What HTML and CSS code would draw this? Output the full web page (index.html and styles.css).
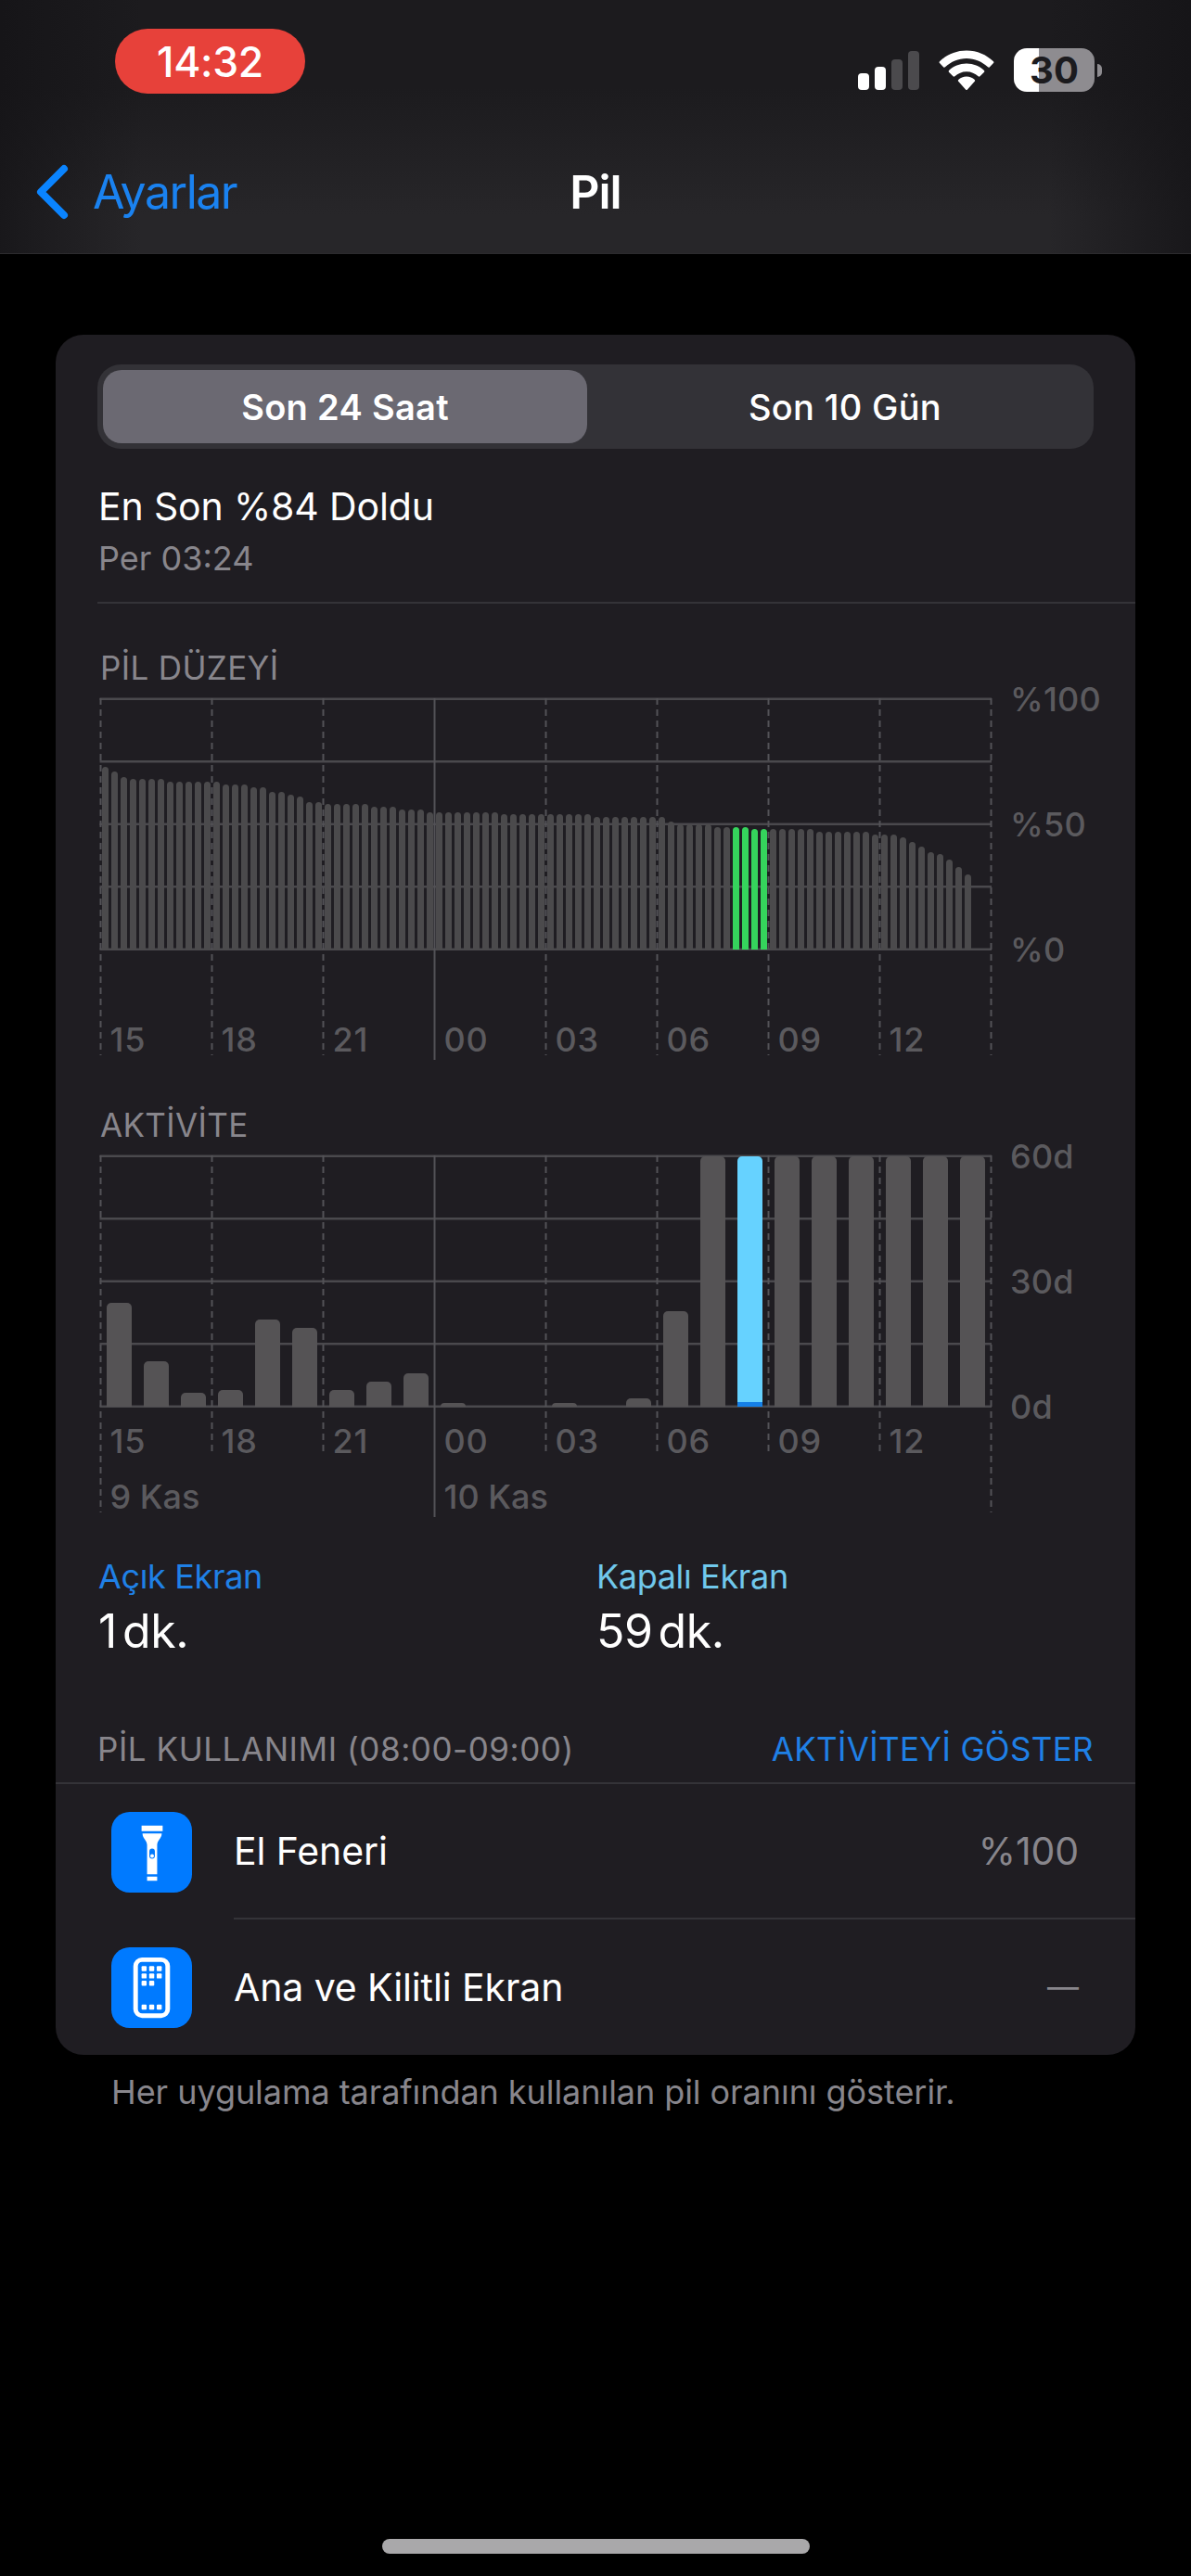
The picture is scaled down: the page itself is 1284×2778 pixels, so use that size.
FILE: index.html
```html
<!DOCTYPE html>
<html lang="tr">
<head>
<meta charset="utf-8">
<title>Pil</title>
<link rel="stylesheet" href="styles.css">
</head>

<body>
<header class="top">
  <div class="status">
    <span class="clock">14:32</span>
    <div class="status-icons">
      <svg class="signal" width="66" height="42" viewBox="0 0 66 42">
        <rect x="0" y="24" width="12" height="18" rx="4" fill="#fff"/>
        <rect x="18" y="17" width="12" height="25" rx="4" fill="#fff"/>
        <rect x="36" y="9" width="12" height="33" rx="4" fill="#4b4a4d"/>
        <rect x="54" y="0" width="12" height="42" rx="4" fill="#4b4a4d"/>
      </svg>
      <svg class="wifi" width="60" height="44" viewBox="0 0 60 44">
        <path fill="#fff" d="M30 0.5 C41.5 0.5 51.5 5 59 12.3 Q59.8 13.2 59 14.1 L55 18.2 Q54 19.2 53 18.3 C46.8 12.5 38.8 9 30 9 C21.2 9 13.2 12.5 7 18.3 Q6 19.2 5 18.2 L1 14.1 Q0.2 13.2 1 12.3 C8.500 5 18.500 0.500 30 0.500 Z"/>
        <path fill="#fff" d="M30 14.500 C37.600 14.500 44 17.300 49 21.900 Q49.800 22.800 49 23.700 L44.500 28.300 Q43.600 29.200 42.600 28.300 C39.300 25.200 35 23.200 30 23.200 C25 23.200 20.700 25.200 17.400 28.300 Q16.400 29.200 15.500 28.300 L11 23.700 Q10.200 22.800 11 21.900 C16 17.300 22.400 14.500 30 14.500 Z"/>
        <path fill="#fff" d="M30 28.500 C33.500 28.500 36.500 29.900 38.800 32 Q39.700 32.900 38.800 33.800 L31 42.600 Q30 43.600 29 42.600 L21.200 33.800 Q20.300 32.900 21.200 32 C23.500 29.900 26.500 28.500 30 28.500 Z"/>
      </svg>
      <div class="battery"><span>30</span></div>
      <i class="battery-tip"></i>
    </div>
  </div>
  <nav class="nav">
    <a class="back">
      <svg width="36" height="60" viewBox="0 0 36 60"><path d="M31 5 L6 30 L31 55" fill="none" stroke="#0a84ff" stroke-width="8" stroke-linecap="round" stroke-linejoin="round"/></svg>
      <span>Ayarlar</span>
    </a>
    <h1>Pil</h1>
  </nav>
</header>

<main>
  <section class="card">
    <div class="segmented">
      <span class="segment selected">Son 24 Saat</span>
      <span class="segment">Son 10 Gün</span>
    </div>

    <div class="last-charge">
      <p class="charge-title">En Son %84 Doldu</p>
      <p class="charge-time">Per 03:24</p>
    </div>

    <h2>PİL DÜZEYİ</h2>
    <div class="chart">
      <div class="plot">
        <svg class="grid" id="level-grid" width="964" height="392"></svg>
        <div class="bars level" id="level-bars"></div>
        <div class="hours hours-low"><span>15</span><span>18</span><span>21</span><span>00</span><span>03</span><span>06</span><span>09</span><span>12</span></div>
      </div>
      <div class="scale"><span>%100</span><span>%50</span><span>%0</span></div>
    </div>

    <h2>AKTİVİTE</h2>
    <div class="chart">
      <div class="plot">
        <svg class="grid" id="activity-grid" width="964" height="392"></svg>
        <div class="bars activity" id="activity-bars"></div>
        <div class="hours"><span>15</span><span>18</span><span>21</span><span>00</span><span>03</span><span>06</span><span>09</span><span>12</span></div>
        <div class="days"><span>9 Kas</span><span>10 Kas</span></div>
      </div>
      <div class="scale"><span>60d</span><span>30d</span><span>0d</span></div>
    </div>

    <div class="screen-times">
      <div>
        <p class="screen-label on">Açık Ekran</p>
        <p class="screen-value">1<span>dk.</span></p>
      </div>
      <div>
        <p class="screen-label off">Kapalı Ekran</p>
        <p class="screen-value">59<span>dk.</span></p>
      </div>
    </div>

    <div class="usage-head">
      <span class="usage-title">PİL KULLANIMI (08:00-09:00)</span>
      <a class="usage-toggle">AKTİVİTEYİ GÖSTER</a>
    </div>

    <div class="row">
      <svg class="icon" width="87" height="87" viewBox="0 0 88 88">
        <rect width="88" height="88" rx="20" fill="#007aff"/>
        <path fill="#fff" d="M33 15 H56 V21 H33 Z M34 23.500 H55 C55 29 50 31 50 36 V68 H39 V36 C39 31 34 29 34 23.500 Z M39 70.500 H50 V75 H39 Z"/>
        <rect x="41.500" y="40" width="6" height="11" rx="3" fill="#007aff"/>
        <circle cx="44.500" cy="48" r="2" fill="#fff"/>
      </svg>
      <div class="row-body line">
        <span>El Feneri</span>
        <span class="amount">%100</span>
      </div>
    </div>
    <div class="row">
      <svg class="icon" width="87" height="87" viewBox="0 0 88 88">
        <rect width="88" height="88" rx="20" fill="#007aff"/>
        <rect x="26.500" y="13.500" width="35" height="61" rx="7" fill="none" stroke="#fff" stroke-width="5"/>
        <g fill="#fff">
          <rect x="33" y="20.500" width="5.500" height="5.500" rx="1"/><rect x="41.300" y="20.500" width="5.500" height="5.500" rx="1"/><rect x="49.500" y="20.500" width="5.500" height="5.500" rx="1"/>
          <rect x="33" y="28.500" width="5.500" height="5.500" rx="1"/><rect x="41.300" y="28.500" width="5.500" height="5.500" rx="1"/><rect x="49.500" y="28.500" width="5.500" height="5.500" rx="1"/>
          <rect x="33" y="36.500" width="5.500" height="5.500" rx="1"/><rect x="41.300" y="36.500" width="5.500" height="5.500" rx="1"/>
          <rect x="33" y="62.500" width="5.500" height="5.500" rx="1"/><rect x="41.300" y="62.500" width="5.500" height="5.500" rx="1"/><rect x="49.500" y="62.500" width="5.500" height="5.500" rx="1"/>
        </g>
      </svg>
      <div class="row-body">
        <span>Ana ve Kilitli Ekran</span>
        <span class="amount dash">—</span>
      </div>
    </div>
  </section>
  <p class="note">Her uygulama tarafından kullanılan pil oranını gösterir.</p>
</main>

<footer class="home"><i></i></footer>

<script src="charts.js"></script>
</body>
</html>
```
FILE: styles.css
```css
* {
  box-sizing: border-box;
}

body {
  display: flex;
  flex-direction: column;
  width: 1284px;
  height: 2778px;
  margin: 0;
  overflow: hidden;
  background: #000;
  color: #fff;
  font-family: Inter, "Liberation Sans", sans-serif;
  font-size: 36px;
  line-height: 40px;
}

p, h1, h2 {
  margin: 0;
  font-weight: 400;
}

/* status bar and navigation */

.top {
  height: 274px;
  border-bottom: 1px solid #2c2b2e;
  background:
    linear-gradient(90deg, rgba(20, 19, 22, .75), rgba(20, 19, 22, 0) 12%, rgba(20, 19, 22, 0) 88%, rgba(20, 19, 22, .75)),
    linear-gradient(#1c1b1e 35%, #272629 85%);
}

.status {
  display: flex;
  justify-content: space-between;
  height: 140px;
  padding: 31px 96px 0 124px;
}

.clock {
  width: 205px;
  height: 70px;
  border-radius: 35px;
  background: #e7413a;
  font-size: 44.5px;
  font-weight: 500;
  letter-spacing: -.3px;
  line-height: 72px;
  text-align: center;
}

.status-icons {
  display: flex;
  align-items: center;
  height: 89px;
}

.wifi {
  margin-left: 21px;
}

.battery {
  width: 87px;
  height: 47px;
  margin-left: 21px;
  border-radius: 14px;
  background: linear-gradient(90deg, #fff 31%, #8e8c90 31%);
  color: #1c1b1e;
  font-size: 40px;
  font-weight: 700;
  line-height: 48px;
  text-align: center;
}

.battery-tip {
  width: 5px;
  height: 14px;
  margin-left: 3px;
  border-radius: 0 6px 6px 0;
  background: #8e8c90;
}

.nav {
  display: grid;
  grid-template-columns: 1fr auto 1fr;
  align-items: center;
  height: 133px;
}

.back {
  display: flex;
  align-items: center;
  padding-left: 38px;
  color: #1a82f0;
  font-size: 50px;
  letter-spacing: -1.5px;
  line-height: 60px;
}

.back span {
  margin-left: 26px;
}

.nav h1 {
  font-size: 50px;
  font-weight: 600;
  letter-spacing: -1px;
  line-height: 60px;
}

/* card */

main {
  padding: 87px 60px 0;
}

.card {
  width: 1164px;
  height: 1855px;
  padding-top: 32px;
  border-radius: 30px;
  background: #1f1d22;
}

.segmented {
  display: flex;
  width: 1074px;
  height: 91px;
  margin-left: 45px;
  padding: 6px;
  border-radius: 25px;
  background: #333237;
}

.segment {
  flex: 1;
  padding-left: 16px;
  border-radius: 20px;
  font-size: 38px;
  font-weight: 500;
  letter-spacing: .3px;
  line-height: 80px;
  text-align: center;
}

.segment.selected {
  flex: 0 0 522px;
  padding-left: 0;
  background: #6b6972;
  font-weight: 600;
}

.last-charge {
  height: 167px;
  margin-left: 45px;
  padding: 37px 0 0 1px;
  border-bottom: 2px solid #343338;
}

.charge-title {
  font-size: 41px;
  letter-spacing: -.15px;
  line-height: 50px;
}

.charge-time {
  margin-top: 11px;
  color: #88868c;
}

h2 {
  height: 40px;
  margin: 49px 0 12px 48px;
  color: #88868c;
  font-size: 35px;
  letter-spacing: .35px;
}

/* charts */

.chart {
  display: flex;
  height: 392px;
  padding-left: 47px;
  color: #5b5a5e;
  font-weight: 500;
}

.plot {
  position: relative;
  width: 964px;
}

.grid {
  position: absolute;
  top: 0;
  left: 0;
}

.bars {
  position: relative;
  display: flex;
  align-items: flex-end;
  height: 272px;
}

.level {
  gap: 2.5px;
  padding-left: 2.5px;
}

.level i {
  width: 7.5px;
  border-radius: 4px 4px 0 0;
  background: #4b4a4c;
}

.level i.charging {
  background: #35d45c;
}

.activity {
  gap: 13px;
  padding-left: 8px;
}

.activity i {
  width: 27px;
  border-radius: 5px 5px 0 0;
  background: #555355;
}

.activity i.current {
  background: linear-gradient(0deg, #1580e8 5px, #66d2ff 5px);
}

.hours {
  display: flex;
  margin-top: 17px;
  letter-spacing: .8px;
}

.hours-low {
  margin-top: 77px;
}

.hours span {
  width: 120px;
  padding-left: 11.5px;
}

.days {
  display: flex;
  margin-top: 20px;
}

.days span {
  width: 360px;
  padding-left: 11.5px;
}

.scale {
  display: flex;
  flex-direction: column;
  justify-content: space-between;
  height: 310px;
  margin: -18px 0 0 18px;
  letter-spacing: .2px;
}

/* screen on / off */

.screen-times {
  display: flex;
  margin-top: 43px;
  padding-left: 46px;
}

.screen-times > div {
  width: 537px;
}

.screen-label {
  letter-spacing: -.35px;
}

.screen-label.on {
  color: #1f80e6;
}

.screen-label.off {
  color: #70c8ec;
}

.screen-value {
  margin-top: 9px;
  font-size: 50px;
  letter-spacing: -.4px;
  line-height: 60px;
}

.screen-value span {
  margin-left: 6px;
}

/* usage list */

.usage-head {
  display: flex;
  justify-content: space-between;
  margin-top: 77px;
  padding: 0 45px 16px;
  border-bottom: 2px solid #343338;
  font-size: 35px;
}

.usage-title {
  color: #88868c;
  letter-spacing: .55px;
}

.usage-toggle {
  color: #1f80e6;
  letter-spacing: .35px;
}

.row {
  display: flex;
  align-items: center;
  height: 146px;
  padding-left: 60px;
}

.row-body {
  display: flex;
  align-items: center;
  justify-content: space-between;
  flex: 1;
  height: 146px;
  margin-left: 45px;
  padding-right: 61px;
  font-size: 41px;
  letter-spacing: -.1px;
  line-height: 50px;
}

.row-body.line {
  border-bottom: 2px solid #343338;
}

.amount {
  color: #88868c;
}

.amount.dash {
  font-size: 34px;
}

.note {
  margin: 20px 0 0 60px;
  color: #88868c;
  letter-spacing: -.06px;
}

.home {
  margin-top: auto;
  padding-bottom: 24px;
}

.home i {
  display: block;
  width: 461px;
  height: 16px;
  margin: 0 auto;
  border-radius: 8px;
  background: #a9a8aa;
}
```
FILE: charts.js
```javascript
// [value, number of quarter hours]
var level = [
  [73, 1], [71, 1], [69, 1], [68, 4], [67, 6], [66, 3], [65, 2], [63, 2], [62, 1],
  [61, 1], [59, 2], [58, 5], [57, 3], [56, 3], [55, 8], [54, 10], [53, 8], [51, 1],
  [50, 4], [49, 4], [48, 7], [47, 6], [46, 3], [45, 1], [43, 1], [41, 1], [39, 1],
  [38, 1], [36, 1], [33, 1], [30, 1]
];
// minutes for each hour, from 15:00
var activity = [25, 11, 3.3, 4, 21, 19, 4, 6, 8, 1, 0, 0, 1, 0, 2, 23, 60, 60, 60, 60, 60, 60, 60, 60];

function addBar(id, height, cls) {
  var bar = document.createElement('i');
  bar.style.height = height + 'px';
  if (cls) bar.className = cls;
  document.getElementById(id).appendChild(bar);
}

function drawGrid(id, ends) {
  var out = '', i, x;
  for (i = 0; i < 5; i++) {
    out += '<line x1="0.5" x2="962" y1="' + (1.7 + i * 67.5) + '" y2="' + (1.7 + i * 67.5) + '" stroke="#4a494d" stroke-width="2.4"/>';
  }
  for (i = 0; i < 9; i++) {
    x = 1.5 + i * 120;
    out += '<line x1="' + x + '" x2="' + x + '" y1="1" y2="' + ends[i] + '" stroke="#535257" stroke-width="2"' + (i === 3 ? '' : ' stroke-dasharray="7 5"') + '/>';
  }
  document.getElementById(id).innerHTML = out;
}

var n = 0;
level.forEach(function (run) {
  for (var k = 0; k < run[1]; k++) {
    addBar('level-bars', run[0] * 2.7, n >= 68 && n < 72 ? 'charging' : '');
    n++;
  }
});
activity.forEach(function (minutes, hour) {
  addBar('activity-bars', minutes * 4.5, hour === 17 ? 'current' : '');
});

drawGrid('level-grid', [386, 386, 386, 391, 386, 386, 386, 386, 386]);
drawGrid('activity-grid', [386, 325, 325, 391, 325, 325, 325, 325, 386]);
```
